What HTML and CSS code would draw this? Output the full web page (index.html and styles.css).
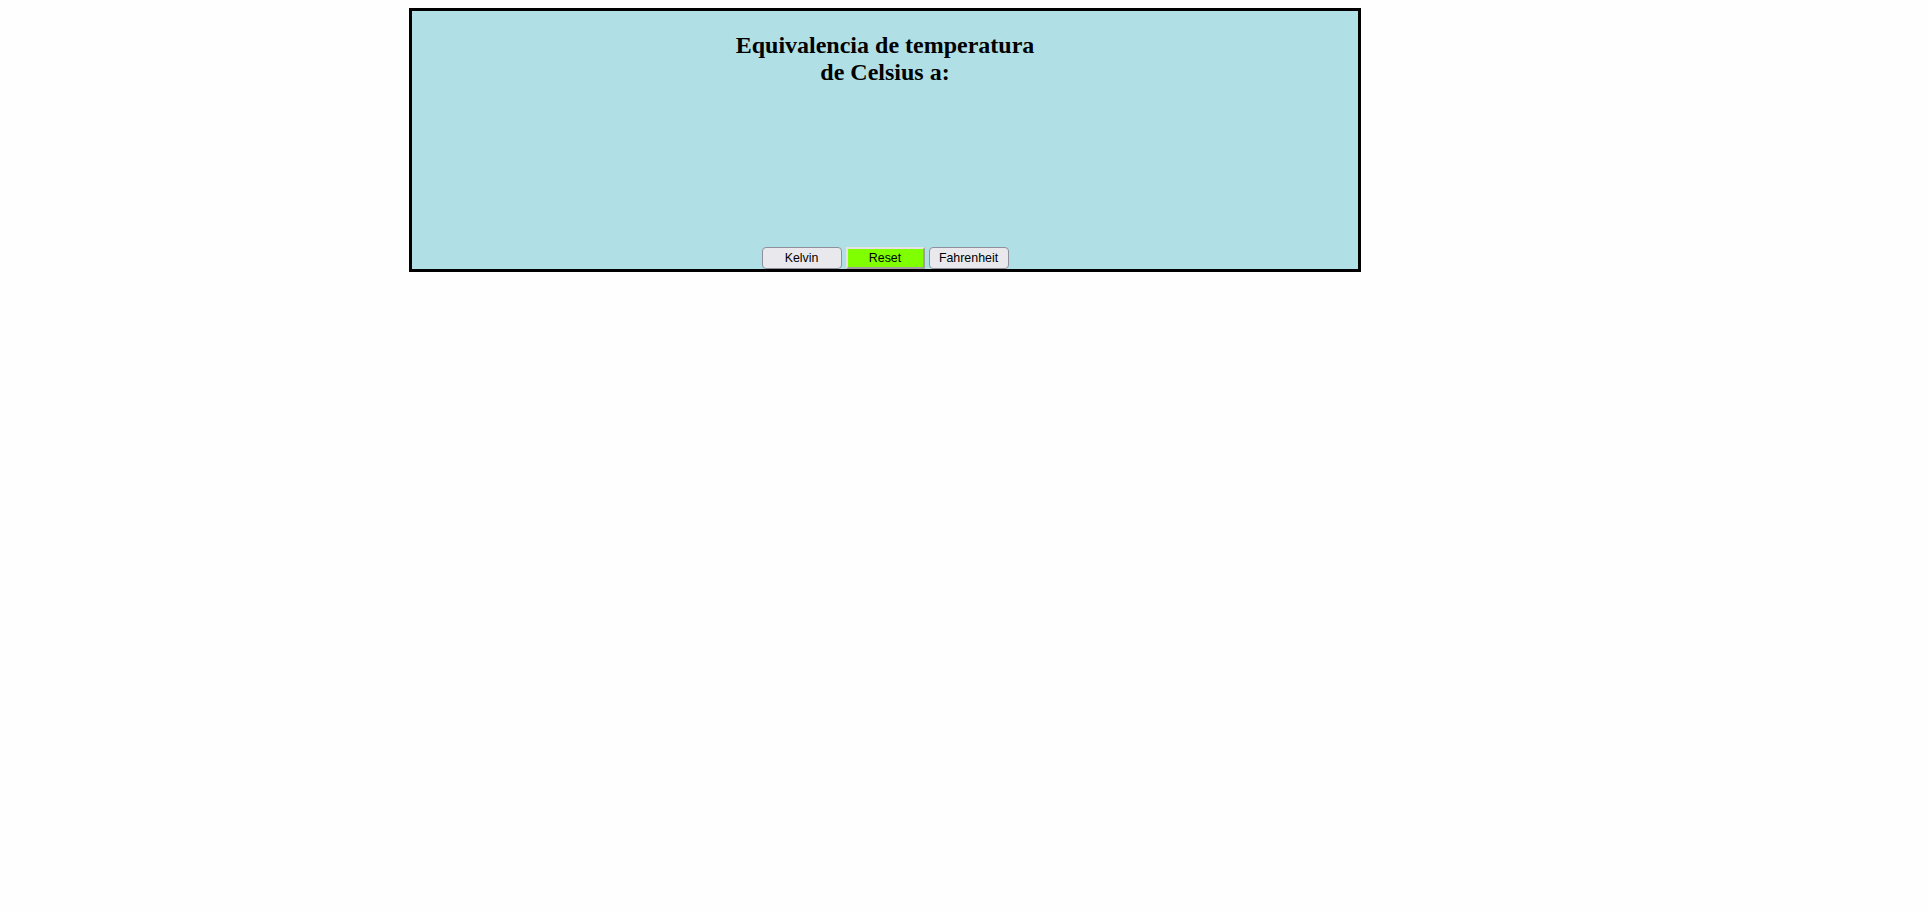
FILE: index.html
```html
<!DOCTYPE html>
<html>
<head>
<meta charset="utf-8">
<link rel="stylesheet" href="styles.css">
</head>
<body>
<div class="panel">
  <h2 class="title">Equivalencia de temperatura<br>de Celsius a:</h2>
  <div class="buttons">
    <button class="btn">Kelvin</button>
    <button class="btn btn-reset">Reset</button>
    <button class="btn">Fahrenheit</button>
  </div>
</div>
</body>
</html>
```
FILE: styles.css
```css
html, body {
  background: #fefefe;
}
body {
  margin: 8px;
}
.panel {
  margin-left: 401px;
  width: 946px;
  height: 258px;
  border: 3px solid #000;
  background: #b0e0e6;
  display: flex;
  flex-direction: column;
  align-items: center;
}
.title {
  font-family: "Liberation Serif", "Times New Roman", serif;
  font-size: 24px;
  font-weight: bold;
  text-align: center;
  margin: 21px 0 0 0;
  line-height: 27px;
  color: #000;
}
.buttons {
  margin-top: auto;
  display: flex;
  gap: 4px;
}
.btn {
  width: 80px;
  height: 22px;
  box-sizing: border-box;
  font-family: "Liberation Sans", Arial, sans-serif;
  font-size: 12.4px;
  color: #000;
  background: #e9e9ed;
  border: 1px solid #8f8f9d;
  border-radius: 4px;
  padding: 0;
  margin: 0;
}
.btn-reset {
  width: 79px;
  background: #7fff00;
  border: 2px solid;
  border-color: #e3e3e3 #a0a0a0 #a0a0a0 #e3e3e3;
  border-radius: 0;
}
```
